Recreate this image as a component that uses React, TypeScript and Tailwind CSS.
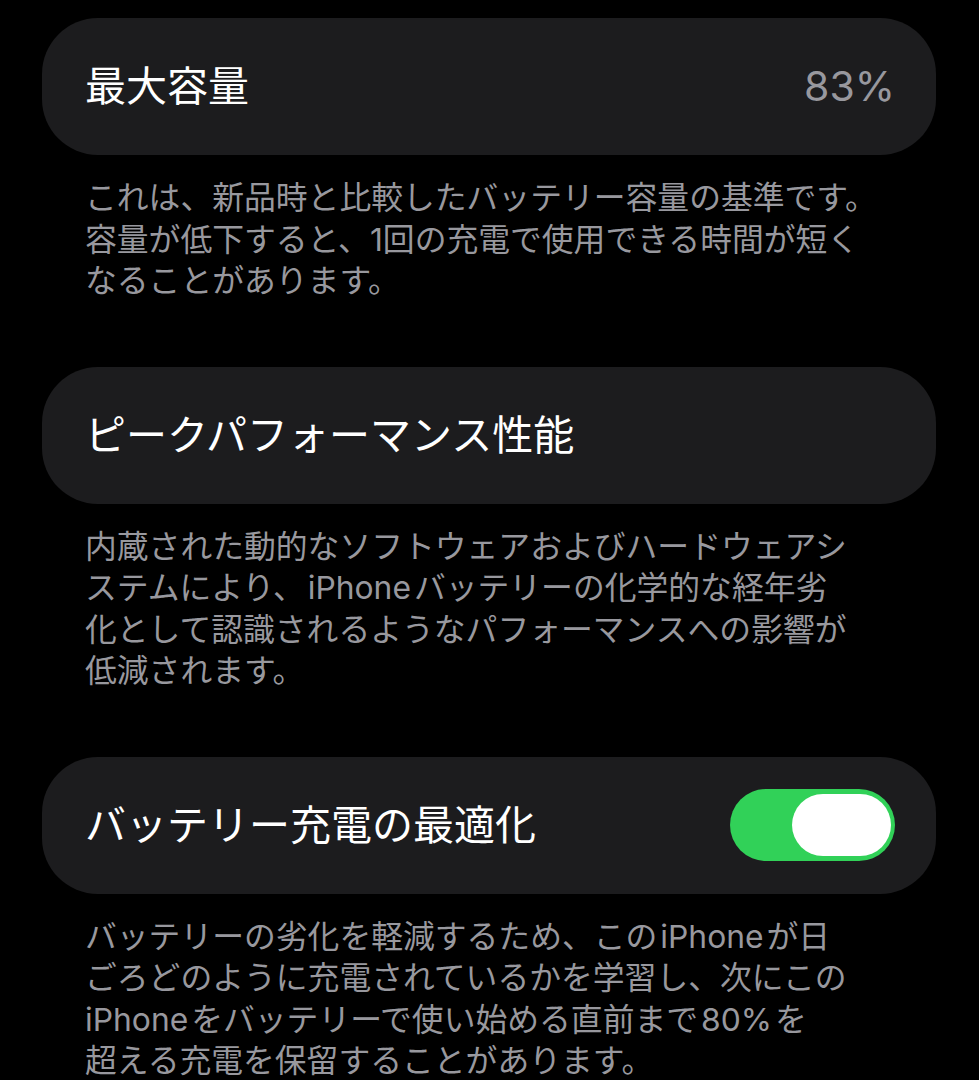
import React from "react";

const font = "font-['Inter','Noto_Sans_CJK_JP',sans-serif]";

function Latin({ children }: { children: React.ReactNode }) {
  return <span className="mx-[3px]">{children}</span>;
}

function Card({ children }: { children: React.ReactNode }) {
  return (
    <div className="h-[137px] rounded-[56px] bg-[#1c1c1e] flex items-center justify-between pl-[43px] pr-[41px]">
      {children}
    </div>
  );
}

function Desc({ children, last }: { children: React.ReactNode; last?: boolean }) {
  return (
    <p
      className={`mt-[22px] ${last ? "" : "mb-[65px]"} pl-[43px] text-[31.8px] leading-[41.5px] text-[#98989e] whitespace-nowrap`}
    >
      {children}
    </p>
  );
}

export default function App() {
  return (
    <div className={`min-h-screen w-full bg-black pl-[42px] pr-[43px] pt-[18px] ${font}`}>
      <Card>
        <span className="text-[41px] text-white leading-none">最大容量</span>
        <span className="text-[41px] text-[#98989e] leading-none">83%</span>
      </Card>
      <Desc>
        これは、新品時と比較したバッテリー容量の基準です。
        <br />
        容量が低下すると、1回の充電で使用できる時間が短く
        <br />
        なることがあります。
      </Desc>

      <Card>
        <span className="text-[41px] text-white leading-none">ピークパフォーマンス性能</span>
      </Card>
      <Desc>
        内蔵された動的なソフトウェアおよびハードウェアシ
        <br />
        ステムにより、<Latin>iPhone</Latin>バッテリーの化学的な経年劣
        <br />
        化として認識されるようなパフォーマンスへの影響が
        <br />
        低減されます。
      </Desc>

      <Card>
        <span className="text-[41px] text-white leading-none">バッテリー充電の最適化</span>
        <div className="w-[165px] h-[72px] rounded-full bg-[#31d158] flex items-center justify-end pr-[4px]">
          <div className="w-[99px] h-[62px] rounded-full bg-white" />
        </div>
      </Card>
      <Desc last>
        バッテリーの劣化を軽減するため、この<Latin>iPhone</Latin>が日
        <br />
        ごろどのように充電されているかを学習し、次にこの
        <br />
        <span className="mr-[3px]">iPhone</span>をバッテリーで使い始める直前まで<Latin>80%</Latin>を
        <br />
        超える充電を保留することがあります。
      </Desc>
    </div>
  );
}
